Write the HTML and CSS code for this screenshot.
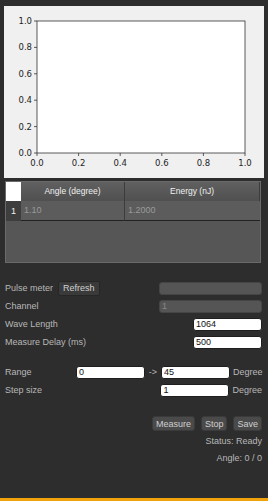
FILE: index.html
```html
<!DOCTYPE html>
<html>
<head>
    <title>Pulse Energy Scan</title>
    <link rel="stylesheet" href="styles.css">
</head>
<body>
    <div class="window">
        <div class="figure">
            <svg width="260" height="172" viewBox="0 0 260 172">
                <rect x="33" y="15" width="208" height="132" fill="#fff" stroke="#333" stroke-width="0.8"/>
                <g stroke="#333" stroke-width="0.8">
                    <line x1="33" y1="147" x2="33" y2="150"/>
                    <line x1="74.6" y1="147" x2="74.6" y2="150"/>
                    <line x1="116.2" y1="147" x2="116.2" y2="150"/>
                    <line x1="157.8" y1="147" x2="157.8" y2="150"/>
                    <line x1="199.4" y1="147" x2="199.4" y2="150"/>
                    <line x1="241" y1="147" x2="241" y2="150"/>
                    <line x1="30" y1="15" x2="33" y2="15"/>
                    <line x1="30" y1="41.4" x2="33" y2="41.4"/>
                    <line x1="30" y1="67.8" x2="33" y2="67.8"/>
                    <line x1="30" y1="94.2" x2="33" y2="94.2"/>
                    <line x1="30" y1="120.6" x2="33" y2="120.6"/>
                    <line x1="30" y1="147" x2="33" y2="147"/>
                </g>
                <g class="tick" text-anchor="middle">
                    <text x="33" y="160">0.0</text>
                    <text x="74.6" y="160">0.2</text>
                    <text x="116.2" y="160">0.4</text>
                    <text x="157.8" y="160">0.6</text>
                    <text x="199.4" y="160">0.8</text>
                    <text x="241" y="160">1.0</text>
                </g>
                <g class="tick" text-anchor="end">
                    <text x="28" y="18">1.0</text>
                    <text x="28" y="44.4">0.8</text>
                    <text x="28" y="70.8">0.6</text>
                    <text x="28" y="97.2">0.4</text>
                    <text x="28" y="123.6">0.2</text>
                    <text x="28" y="150">0.0</text>
                </g>
            </svg>
        </div>

        <div class="grid">
            <div class="grid-head">
                <div class="corner"></div>
                <div class="col col-a">Angle (degree)</div>
                <div class="col col-b">Energy (nJ)</div>
            </div>
            <div class="grid-row">
                <div class="row-num">1</div>
                <div class="cell col-a">1.10</div>
                <div class="cell col-b">1.2000</div>
            </div>
        </div>

        <div class="form">
            <div class="line">
                <span class="label">Pulse meter</span>
                <button class="btn">Refresh</button>
                <span class="grow"></span>
                <div class="field disabled wide"></div>
            </div>
            <div class="line">
                <span class="label">Channel</span>
                <span class="grow"></span>
                <div class="field disabled wide">1</div>
            </div>
            <div class="line">
                <span class="label">Wave Length</span>
                <span class="grow"></span>
                <div class="field input">1064</div>
            </div>
            <div class="line">
                <span class="label">Measure Delay (ms)</span>
                <span class="grow"></span>
                <div class="field input">500</div>
            </div>

            <div class="line range">
                <span class="label lbl-range">Range</span>
                <div class="field input">0</div>
                <span class="arrow">-&gt;</span>
                <div class="field input">45</div>
                <span class="grow"></span>
                <span class="unit">Degree</span>
            </div>
            <div class="line">
                <span class="label">Step size</span>
                <span class="grow"></span>
                <div class="field input">1</div>
                <span class="unit">Degree</span>
            </div>

            <div class="actions">
                <button class="btn small">Measure</button>
                <button class="btn small">Stop</button>
                <button class="btn small">Save</button>
            </div>
            <div class="status first">Status: Ready</div>
            <div class="status">Angle: 0 / 0</div>
        </div>
    </div>
</body>
</html>
```

FILE: styles.css
```css
body {
    margin: 0;
    background: #2d2d2d;
    font-family: "Liberation Sans", Arial, sans-serif;
    font-size: 9px;
    color: #b8b8b8;
}
.window {
    height: 498px;
    border-bottom: 3px solid #f0a30a;
    overflow: hidden;
}
.figure {
    margin: 6px 4px 0 4px;
    height: 172px;
    background: #f0f0f0;
}
.figure svg {
    display: block;
}
.tick {
    font-family: "DejaVu Sans", sans-serif;
    font-size: 8.5px;
    fill: #1e1e1e;
}
.grid {
    margin: 3px 7px 0 5px;
    height: 82px;
    background: #565656;
    border: 1px solid #6a6a6a;
    box-sizing: border-box;
}
.grid-head {
    display: flex;
    height: 19px;
}
.corner {
    width: 15px;
    background: #fff;
}
.col {
    background: linear-gradient(#606060, #505050);
    color: #f0f0f0;
    font-size: 8.5px;
    text-align: center;
    line-height: 19px;
    border-right: 1px solid #3c3c3c;
    box-sizing: border-box;
}
.col-a {
    width: 104px;
}
.col-b {
    flex: 1;
}
.grid-row {
    display: flex;
    height: 20px;
}
.row-num {
    width: 15px;
    background: #3e3e3e;
    color: #f0f0f0;
    text-align: center;
    line-height: 20px;
}
.cell {
    line-height: 19px;
    padding-left: 3px;
    color: #9a9a9a;
    background: #5c5c5c;
    border-bottom: 1px solid #222;
    border-right: 1px solid #3c3c3c;
    box-sizing: border-box;
}
.cell.col-b {
    border-right: none;
}
.form {
    padding: 16px 6px 0 5px;
}
.line {
    display: flex;
    align-items: center;
    height: 18px;
}
.line > * {
    flex-shrink: 0;
}
.line > .grow {
    flex: 1;
    flex-shrink: 1;
}
.btn {
    font-family: "Liberation Sans", Arial, sans-serif;
    font-size: 9px;
    color: #d0d0d0;
    background: #3a3a3a;
    border: 1px solid #262626;
    border-radius: 2px;
    height: 15px;
    padding: 0 4px;
    margin-left: 5px;
}
.field {
    height: 11px;
    line-height: 11px;
    border-radius: 3px;
    padding: 0 2px;
}
.field.disabled {
    background: #555;
    border: 1px solid #454545;
    color: #888;
}
.field.wide {
    width: 97px;
}
.field.input {
    width: 63px;
    background: #fff;
    color: #111;
    border: 1px solid #1e1e1e;
}
.range {
    margin-top: 12px;
}
.lbl-range {
    width: 71px;
}
.arrow {
    width: 16px;
    text-align: center;
}
.unit {
    margin-left: 3px;
}
.actions {
    display: flex;
    justify-content: flex-end;
    margin-top: 17px;
    gap: 6px;
}
.btn.small {
    background: #4a4a4a;
    border-color: #3a3a3a;
    border-radius: 3px;
    margin: 0;
    padding: 0 3px;
}
.status {
    text-align: right;
    line-height: 17px;
}
.status.first {
    margin-top: 2px;
}
```
